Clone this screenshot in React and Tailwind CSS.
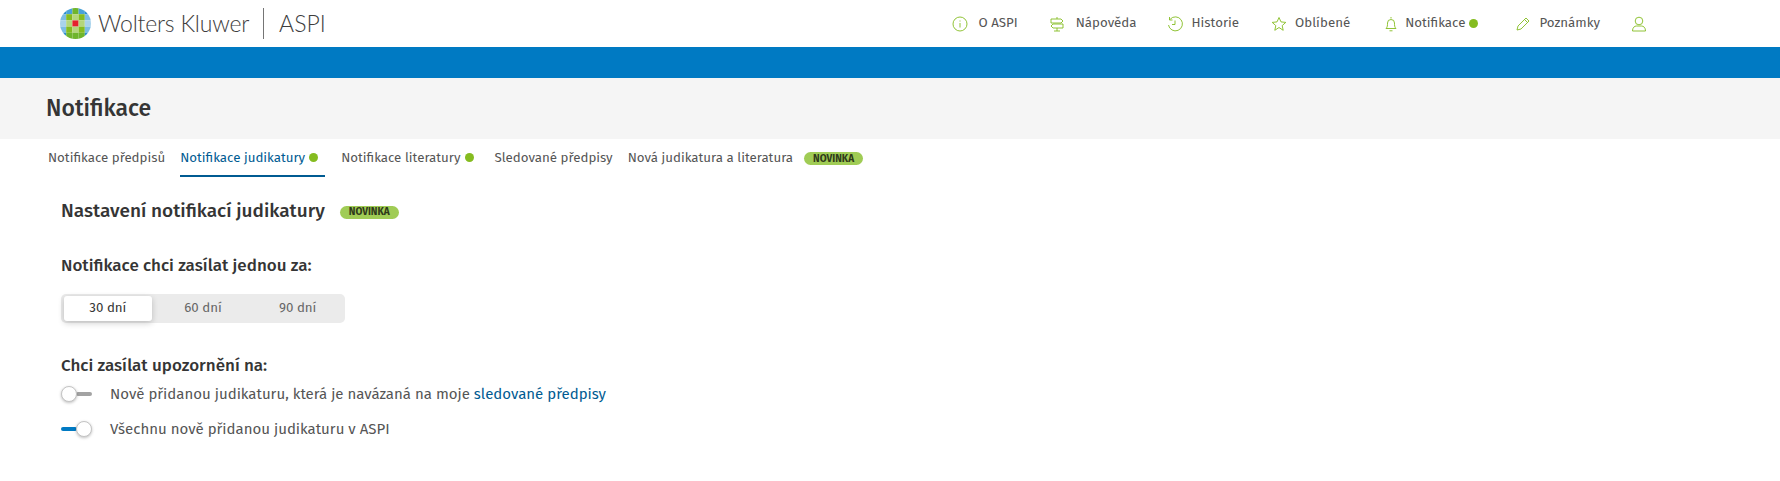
import React from "react";

const FONT = "font-['Fira_Sans','Noto_Sans',sans-serif]";

// logo cells, row by row
const GLOBE = [
  ["#2f8fcc", "#4aa3d8", "#6fb52c", "#4aa3d8", "#2f8fcc"],
  ["#7dbde4", "#85bc20", "#b4d67c", "#85bc20", "#7dbde4"],
  ["#a9d3ec", "#b4d67c", "#e5202e", "#b4d67c", "#a9d3ec"],
  ["#7dbde4", "#85bc20", "#b4d67c", "#85bc20", "#7dbde4"],
  ["#2f8fcc", "#6fb52c", "#6fb52c", "#6fb52c", "#2f8fcc"],
];

function Dot() {
  return <span className="ml-1 inline-block h-[9px] w-[9px] rounded-full bg-[#85bc20]" />;
}

function Badge() {
  return (
    <span className="inline-flex h-[13px] w-[59px] items-center justify-center rounded-full bg-[#a0cc55] text-[10px] font-bold text-[#2f3a1a]">
      NOVINKA
    </span>
  );
}

function Logo() {
  return (
    <div className="flex items-center">
      <svg width="31" height="31" viewBox="0 0 30 30">
        <defs>
          <clipPath id="globe">
            <circle cx="15" cy="15" r="15" />
          </clipPath>
        </defs>
        <g clipPath="url(#globe)">
          {GLOBE.map((row, y) =>
            row.map((c, x) => <rect key={`${x}-${y}`} x={x * 6} y={y * 6} width="6" height="6" fill={c} />)
          )}
        </g>
      </svg>
      <span className="ml-[7px] font-['Lato',sans-serif] text-[23px] font-light tracking-[-0.2px] text-[#3d3d3d]">
        Wolters Kluwer
      </span>
      <span className="ml-[14px] h-[31px] w-px bg-[#757575]" />
      <span className="ml-[15px] font-['Lato',sans-serif] text-[23px] font-light text-[#3d3d3d]">ASPI</span>
    </div>
  );
}

const ICON = "h-[16px] w-[16px] fill-none stroke-[#85bc20] stroke-[0.9]";

function NavItem({ icon, label, dot, gap, ml }) {
  return (
    <div className={`flex items-center ${ml}`}>
      {icon}
      <span className={`${gap} text-[13.3px] text-[#555]`}>{label}</span>
      {dot && <Dot />}
    </div>
  );
}

function Toggle({ on }) {
  return (
    <div className="relative h-[16px] w-[31px]">
      <div className={`absolute top-[6px] h-[4px] rounded-sm ${on ? "left-0 w-[16px] bg-[#007ac3]" : "right-0 w-[16px] bg-[#a3a3a3]"}`} />
      <div className={`absolute top-0 h-[16px] w-[16px] rounded-full border border-[#c4c4c4] bg-white shadow-[0_1px_3px_rgba(0,0,0,0.25)] ${on ? "right-0" : "left-0"}`} />
    </div>
  );
}

export default function App() {
  return (
    <div className={`h-[481px] overflow-hidden bg-white ${FONT}`}>
      <header className="flex h-[47px] items-center justify-between pl-[60px] pr-[133px]">
        <Logo />
        <nav className="flex items-center">
          <NavItem
            gap="ml-[10px]"
            ml=""
            label="O ASPI"
            icon={
              <svg viewBox="0 0 16 16" className={ICON}>
                <circle cx="8" cy="8" r="7" />
                <path d="M8 7v4.5M8 4.5v1" />
              </svg>
            }
          />
          <NavItem
            gap="ml-[11px]"
            ml="ml-[31px]"
            label="Nápověda"
            icon={
              <svg viewBox="0 0 16 16" className={ICON}>
                <path d="M8 1v2M8 12v3M5 15h6M2 3h10l2 2-2 2H2zM14 8H4l-2 2 2 2h10z" />
              </svg>
            }
          />
          <NavItem
            gap="ml-[9px]"
            ml="ml-[30px]"
            label="Historie"
            icon={
              <svg viewBox="0 0 16 16" className={ICON}>
                <path d="M3.2 3.2A7 7 0 1 1 1.5 9M2.5 1v3h3M8 4.5V8.5H5" />
              </svg>
            }
          />
          <NavItem
            gap="ml-[8px]"
            ml="ml-[32px]"
            label="Oblíbené"
            icon={
              <svg viewBox="0 0 16 16" className={ICON}>
                <path d="M8 1.5l2 4.4 4.8.5-3.6 3.2 1 4.7L8 11.5l-4.2 2.8 1-4.7L1.2 6.4 6 5.9z" />
              </svg>
            }
          />
          <NavItem
            gap="ml-[6px]"
            ml="ml-[33px]"
            dot
            label="Notifikace"
            icon={
              <svg viewBox="0 0 16 16" className={ICON}>
                <path d="M8 1v1.5M3 12.5c1.5-1.5 1.5-3 1.5-5.5a3.5 3.5 0 0 1 7 0c0 2.5 0 4 1.5 5.5zM6.5 14.8h3" />
              </svg>
            }
          />
          <NavItem
            gap="ml-[8px]"
            ml="ml-[37px]"
            label="Poznámky"
            icon={
              <svg viewBox="0 0 16 16" className={ICON}>
                <path d="M2 14l1-4 8-8 3 3-8 8zM9.5 3.5l3 3" />
              </svg>
            }
          />
          <div className="ml-[31px]">
            <svg viewBox="0 0 16 16" className={ICON}>
              <circle cx="8" cy="5" r="3.8" />
              <path d="M1.5 15c0-3.5 2-5 4-5h5c2 0 4 1.5 4 5z" />
            </svg>
          </div>
        </nav>
      </header>

      <div className="h-[31px] bg-[#007ac3]" />

      <div className="flex h-[61px] items-center bg-[#f5f5f5] pb-[1px] pl-[46px]">
        <h1 className="text-[23px] font-medium text-[#353535]">Notifikace</h1>
      </div>

      <div className="flex h-[38px] items-start pl-[48px] text-[13.3px] leading-[20px] text-[#555]">
        <a className="mr-[15px] pt-[9px]">Notifikace předpisů</a>
        <a className="mr-[16px] flex h-[38px] items-start border-b-2 border-[#005b92] pr-[7px] pt-[9px] text-[#005b92]">
          Notifikace judikatury
          <span className="mt-[5px] flex"><Dot /></span>
        </a>
        <a className="mr-[21px] flex items-start pt-[9px]">
          Notifikace literatury
          <span className="mt-[5px] flex"><Dot /></span>
        </a>
        <a className="mr-[15px] pt-[9px]">Sledované předpisy</a>
        <a className="pt-[9px]">Nová judikatura a literatura</a>
        <span className="ml-[11px] mt-[13px] flex"><Badge /></span>
      </div>

      <main className="pl-[61px]">
        <div className="mt-[22px] flex items-center">
          <h2 className="text-[19px] font-medium leading-[24px] text-[#353535]">Nastavení notifikací judikatury</h2>
          <span className="ml-[15px] mt-[3px] flex"><Badge /></span>
        </div>

        <h3 className="mt-[32px] text-[17px] font-medium leading-[22px] text-[#353535]">
          Notifikace chci zasílat jednou za:
        </h3>

        <div className="mt-[17px] flex h-[29px] w-[284px] items-center rounded-[5px] bg-[#ebebeb] pl-[3px] text-[13.3px] text-[#666]">
          <div className="flex h-[25px] w-[88px] items-center justify-center rounded-[3px] bg-white text-[#353535] shadow-[0_2px_6px_rgba(0,0,0,0.2)]">
            30 dní
          </div>
          <div className="ml-[4px] flex w-[95px] justify-center">60 dní</div>
          <div className="flex w-[95px] justify-center">90 dní</div>
        </div>

        <h3 className="mt-[32px] text-[17px] font-medium leading-[22px] text-[#353535]">Chci zasílat upozornění na:</h3>

        <div className="mt-[4px] flex h-[26px] items-center text-[15px] text-[#555]">
          <Toggle />
          <span className="ml-[18px]">
            Nově přidanou judikaturu, která je navázaná na moje <a className="text-[#005b92]">sledované předpisy</a>
          </span>
        </div>
        <div className="mt-[9px] flex h-[26px] items-center text-[15px] text-[#555]">
          <Toggle on />
          <span className="ml-[18px]">Všechnu nově přidanou judikaturu v ASPI</span>
        </div>
      </main>
    </div>
  );
}
